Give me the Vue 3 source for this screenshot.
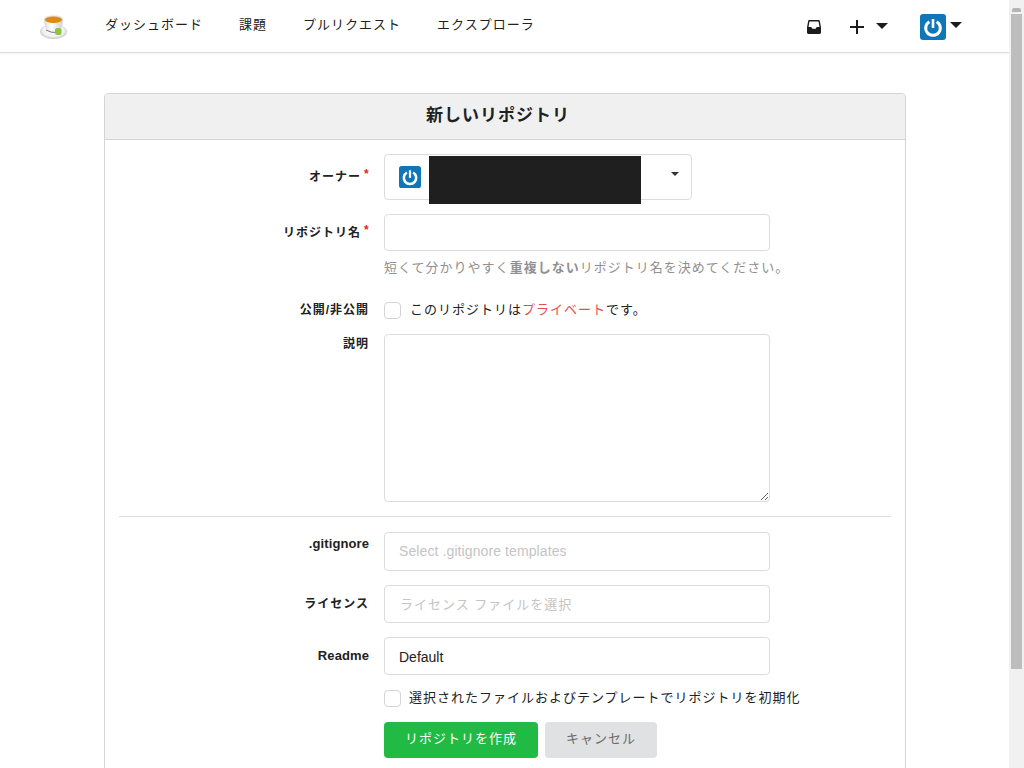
<script setup>
import { ref } from 'vue'

const navItems = ['ダッシュボード', '課題', 'プルリクエスト', 'エクスプローラ']

const repoName = ref('')
const description = ref('')
const isPrivate = ref(false)
const autoInit = ref(false)
</script>

<template>
  <div class="page">
    <div class="main">
      <nav class="navbar">
        <svg class="logo" viewBox="0 0 30 26" width="30" height="26">
          <defs>
            <radialGradient id="saucer" cx="50%" cy="45%" r="55%">
              <stop offset="0%" stop-color="#fafafa" />
              <stop offset="70%" stop-color="#f2f2f2" />
              <stop offset="100%" stop-color="#c4c4c4" />
            </radialGradient>
            <linearGradient id="cup" x1="0" y1="0" x2="1" y2="0">
              <stop offset="0%" stop-color="#d8d8d8" />
              <stop offset="40%" stop-color="#ffffff" />
              <stop offset="100%" stop-color="#cfcfcf" />
            </linearGradient>
            <filter id="soft"><feGaussianBlur stdDeviation="0.35" /></filter>
          </defs>
          <g filter="url(#soft)">
            <ellipse cx="15.500" cy="17.500" rx="13.500" ry="7.500" fill="url(#saucer)" />
            <path d="M6 5 C6 13 9 18 15.500 18 C22 18 25 13 25 5 Z" fill="url(#cup)" />
            <ellipse cx="15.500" cy="5.200" rx="9.800" ry="4" fill="#e8e6dc" />
            <ellipse cx="15.500" cy="5.700" rx="8.600" ry="3.200" fill="#de8a12" />
            <path d="M8 16 Q13 19 19 18.500" fill="none" stroke="#666" stroke-width="0.900" />
            <rect x="17" y="14" width="6.500" height="7" rx="2" fill="#8cc63f" />
          </g>
        </svg>
        <a v-for="item in navItems" :key="item" class="nav-link">{{ item }}</a>
        <div class="nav-right">
          <svg class="inbox" viewBox="0 0 14 14" width="14" height="14">
            <path d="M2.200 0h9.600c.5 0 .9.300 1 .7L14 7.500V12.600c0 .8-.6 1.400-1.400 1.400H1.400C.6 14 0 13.400 0 12.600V7.500L1.200.7c.1-.4.5-.7 1-.7z" fill="#1b1c1d" />
            <path d="M2.500 1.400h9l1 5.600H9.700L8.800 8.800H5.200L4.300 7H1.500z" fill="#fff" />
          </svg>
          <svg class="plus" viewBox="0 0 14 14" width="14" height="14">
            <path d="M6 0h2v6h6v2H8v6H6V8H0V6h6z" fill="#1b1c1d" />
          </svg>
          <span class="caret caret-plus"></span>
          <svg class="avatar" viewBox="0 0 26 26" width="26" height="26">
            <rect width="26" height="26" rx="3" fill="#0f76b8" />
            <path d="M16.650 7.680A7.300 7.300 0 1 1 9.350 7.680" fill="none" stroke="#fff" stroke-width="3" />
            <path d="M13 5v9" stroke="#fff" stroke-width="2.600" />
          </svg>
          <span class="caret"></span>
        </div>
      </nav>

      <div class="card">
        <h3 class="card-title">新しいリポジトリ</h3>
        <form class="card-body" @submit.prevent>
          <div class="row row-owner">
            <label class="label required">オーナー</label>
            <div class="owner-select">
              <svg viewBox="0 0 26 26" width="22" height="22">
                <rect width="26" height="26" rx="3" fill="#0f76b8" />
                <path d="M16.650 7.680A7.300 7.300 0 1 1 9.350 7.680" fill="none" stroke="#fff" stroke-width="3" />
                <path d="M13 5v9" stroke="#fff" stroke-width="2.600" />
              </svg>
              <span class="redacted"></span>
              <span class="caret-small"></span>
            </div>
          </div>

          <div class="row row-name">
            <label class="label required">リポジトリ名</label>
            <input v-model="repoName" class="input input-name" type="text" />
          </div>
          <div class="help">短くて分かりやすく<b>重複しない</b>リポジトリ名を決めてください。</div>

          <div class="row row-private">
            <label class="label">公開/非公開</label>
            <label class="check check-private">
              <input v-model="isPrivate" type="checkbox" />
              <span>このリポジトリは<span class="red">プライベート</span>です。</span>
            </label>
          </div>

          <div class="row row-desc">
            <label class="label">説明</label>
            <textarea v-model="description" class="input textarea"></textarea>
          </div>

          <div class="divider"></div>

          <div class="row row-gitignore">
            <label class="label label-latin">.gitignore</label>
            <div class="input select placeholder">Select .gitignore templates</div>
          </div>
          <div class="row row-license">
            <label class="label label-center">ライセンス</label>
            <div class="input select placeholder">ライセンス ファイルを選択</div>
          </div>
          <div class="row row-readme">
            <label class="label label-center label-latin">Readme</label>
            <div class="input select">Default</div>
          </div>

          <div class="row row-init">
            <div class="label"></div>
            <label class="check">
              <input v-model="autoInit" type="checkbox" />
              <span>選択されたファイルおよびテンプレートでリポジトリを初期化</span>
            </label>
          </div>

          <div class="row row-buttons">
            <div class="label"></div>
            <button class="btn btn-green" type="submit">リポジトリを作成</button>
            <button class="btn btn-grey" type="button">キャンセル</button>
          </div>
        </form>
      </div>
    </div>

    <div class="scrollbar">
      <div class="scroll-arrow"></div>
      <div class="scroll-thumb"></div>
    </div>
  </div>
</template>

<style>
html,
body {
  margin: 0;
  height: 768px;
  overflow: hidden;
  background: #fff;
}
</style>

<style scoped>
.page {
  display: flex;
  height: 768px;
  font-family: 'Liberation Sans', 'Noto Sans CJK JP', sans-serif;
  font-size: 14px;
  color: #212121;
}

.main {
  flex: 1;
  min-width: 0;
  overflow: hidden;
}

.navbar {
  display: flex;
  align-items: center;
  height: 52px;
  padding-left: 38px;
  padding-right: 47px;
  border-bottom: 1px solid #dedede;
  box-shadow: 0 1px 2px rgba(0, 0, 0, 0.06);
}

.logo {
  margin-right: 37px;
  margin-top: 1px;
}

.nav-link {
  margin-right: 36px;
  margin-top: -6px;
  color: #212121;
  font-size: 13px;
  letter-spacing: 1px;
}

.nav-right {
  margin-left: auto;
  display: flex;
  align-items: center;
}

.inbox {
  margin-right: 29px;
  margin-top: 2px;
}

.plus {
  margin-top: 2px;
  margin-right: 12px;
}

.caret {
  width: 0;
  height: 0;
  border-left: 6px solid transparent;
  border-right: 6px solid transparent;
  border-top: 6px solid #1b1c1d;
  margin-top: -3px;
}

.caret-plus {
  margin-right: 32px;
  margin-top: -1px;
}

.avatar {
  margin-right: 4px;
  margin-top: 2px;
}

.card {
  width: 800px;
  margin: 40px 0 0 104px;
  border: 1px solid #d4d4d5;
  border-radius: 4px;
  box-sizing: content-box;
}

.card-title {
  margin: 0;
  height: 45px;
  padding-right: 14px;
  line-height: 43px;
  text-align: center;
  font-size: 17px;
  letter-spacing: 1px;
  font-weight: 700;
  background: #f0f0f0;
  border-bottom: 1px solid #d4d4d5;
  border-radius: 4px 4px 0 0;
}

.card-body {
  padding: 14px 14px 40px;
}

.row {
  display: flex;
  align-items: flex-start;
}

.label {
  flex: none;
  width: 250px;
  margin-right: 15px;
  text-align: right;
  font-size: 12px;
  letter-spacing: 1px;
  font-weight: 700;
  line-height: 18px;
}

.label-latin {
  font-size: 13px;
  letter-spacing: 0.1px;
}

.required::after {
  content: '*';
  color: #db2828;
  margin-left: 3px;
  position: relative;
  top: -3px;
  display: inline-block;
  width: 5px;
  margin-right: 0;
}

.input {
  box-sizing: border-box;
  width: 386px;
  border: 1px solid #dcdcdc;
  border-radius: 4px;
  background: #fff;
  font: inherit;
  color: #212121;
  outline: none;
}

.row-owner .label {
  margin-top: 14px;
}

.owner-select {
  position: relative;
  box-sizing: border-box;
  display: flex;
  align-items: center;
  width: 308px;
  height: 46px;
  padding-left: 14px;
  border: 1px solid #dcdcdc;
  border-radius: 4px;
}

.redacted {
  position: absolute;
  left: 44px;
  top: 1px;
  width: 212px;
  height: 48px;
  background: #1f1f1f;
}

.caret-small {
  position: absolute;
  right: 12px;
  top: 17px;
  width: 0;
  height: 0;
  border-left: 4px solid transparent;
  border-right: 4px solid transparent;
  border-top: 4px solid #333;
}

.row-name {
  margin-top: 14px;
}

.row-name .label {
  margin-top: 10px;
}

.input-name {
  height: 37px;
  padding: 0 14px;
}

.help {
  margin: 7px 0 0 265px;
  line-height: 20px;
  color: #909090;
  font-size: 13px;
  letter-spacing: 1px;
}

.row-private {
  margin-top: 23px;
}

.check {
  display: flex;
  align-items: center;
  height: 18px;
  line-height: 18px;
  font-size: 13px;
  letter-spacing: 1px;
}

.check input {
  appearance: none;
  box-sizing: border-box;
  width: 17px;
  height: 17px;
  margin: 0 8px 0 0;
  border: 1px solid #d4d4d5;
  border-radius: 4px;
  background: #fff;
}

.check-private input {
  margin-right: 9px;
}

.red {
  color: #db5050;
}

.row-desc {
  margin-top: 15px;
}

.row-desc .label {
  margin-top: 1px;
}

.textarea {
  display: block;
  height: 168px;
  padding: 10px 14px;
  resize: vertical;
}

.divider {
  margin-top: 14px;
  border-top: 1px solid #dedede;
}

.row-gitignore {
  margin-top: 15px;
}

.row-gitignore .label {
  margin-top: 3px;
}

.select {
  display: flex;
  align-items: center;
  padding: 0 14px;
}

.row-gitignore .select {
  height: 39px;
  padding-bottom: 2px;
  letter-spacing: 0.1px;
}

.row-license {
  margin-top: 14px;
}

.row-license .select {
  height: 38px;
  padding-bottom: 2px;
  font-size: 13px;
  letter-spacing: 1px;
}

.row-readme {
  margin-top: 14px;
}

.row-readme .select {
  height: 38px;
  padding-top: 2px;
}

.label-center {
  margin-top: 10px;
}

.placeholder {
  color: #c4c4c4;
}

.row-license .placeholder {
  padding-left: 15px;
}

.row-init {
  margin-top: 14px;
}

.row-buttons {
  margin-top: 15px;
}

.btn {
  height: 36px;
  border: none;
  border-radius: 4px;
  padding: 0 0 5px;
  font: inherit;
  font-size: 13px;
  letter-spacing: 1px;
}

.btn-green {
  width: 154px;
  margin-right: 7px;
  background: #21ba45;
  color: #fff;
}

.btn-grey {
  width: 112px;
  background: #e0e1e2;
  color: #6a6a6a;
}

.scrollbar {
  flex: none;
  display: flex;
  flex-direction: column;
  width: 15px;
  background: #f1f1f1;
}

.scroll-arrow {
  height: 4px;
  width: 9px;
  margin: 8px auto 2px;
  background: #b5b5b5;
  border-radius: 2px 2px 0 0;
}

.scroll-thumb {
  width: 11px;
  height: 655px;
  margin-left: 2px;
  background: #bdbdbd;
}
</style>
